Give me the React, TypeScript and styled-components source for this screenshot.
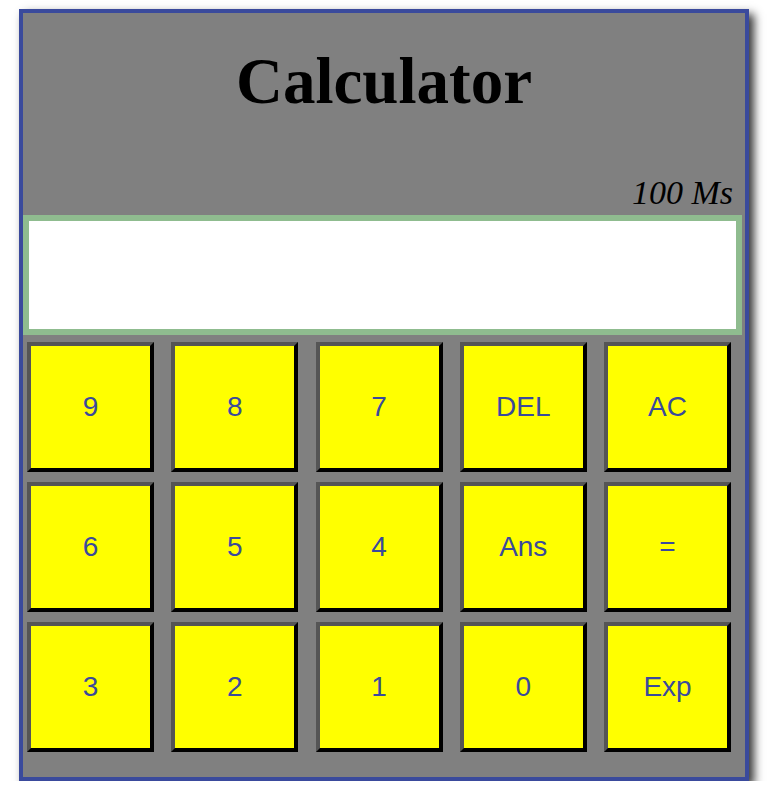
import React from "react";
import styled, { createGlobalStyle } from "styled-components";

const GlobalStyle = createGlobalStyle`
  html, body {
    margin: 0;
    padding: 0;
    background: #ffffff;
  }
  body {
    font-family: "Liberation Serif", "Times New Roman", serif;
  }
`;

const Calculator = styled.div`
  box-sizing: border-box;
  width: 730px;
  margin: 9px 0 0 19px;
  border: 4px solid #3a4a9c;
  background: #808080;
  box-shadow: 5px 5px 9px rgba(0, 0, 0, 0.8);
  padding-bottom: 25px;
`;

const Header = styled.header`
  box-sizing: border-box;
  height: 202px;
  display: flex;
  flex-direction: column;
  padding: 36px 12px 5px 0;
`;

const Title = styled.h1`
  margin: 0;
  font-family: "Liberation Serif", "Times New Roman", serif;
  font-weight: bold;
  font-size: 65px;
  line-height: 1;
  text-align: center;
  color: #000;
  padding-left: 12px;
`;

const Latency = styled.div`
  margin-top: auto;
  font-family: "Liberation Serif", "Times New Roman", serif;
  font-style: italic;
  font-size: 34px;
  line-height: 1;
  text-align: right;
  color: #000;
`;

const Display = styled.div`
  box-sizing: border-box;
  height: 120px;
  margin-right: 3px;
  border: 6px solid #8fbc8f;
  background: #ffffff;
`;

const Keypad = styled.div`
  display: grid;
  grid-template-columns: repeat(5, 127px);
  grid-auto-rows: 130px;
  column-gap: 17.25px;
  row-gap: 10px;
  margin-top: 7px;
  padding-left: 4px;
`;

const Key = styled.button`
  box-sizing: border-box;
  margin: 0;
  padding: 0;
  background: #ffff00;
  border-style: solid;
  border-width: 4px;
  border-color: #555555 #000000 #000000 #555555;
  color: #3a4a9c;
  font-family: "Liberation Sans", Arial, sans-serif;
  font-size: 28px;
  display: flex;
  align-items: center;
  justify-content: center;
  cursor: pointer;
`;

const keys = [
  "9", "8", "7", "DEL", "AC",
  "6", "5", "4", "Ans", "=",
  "3", "2", "1", "0", "Exp",
];

export default function App() {
  return (
    <>
      <GlobalStyle />
      <Calculator>
        <Header>
          <Title>Calculator</Title>
          <Latency>100 Ms</Latency>
        </Header>
        <Display />
        <Keypad>
          {keys.map((k) => (
            <Key key={k}>{k}</Key>
          ))}
        </Keypad>
      </Calculator>
    </>
  );
}
